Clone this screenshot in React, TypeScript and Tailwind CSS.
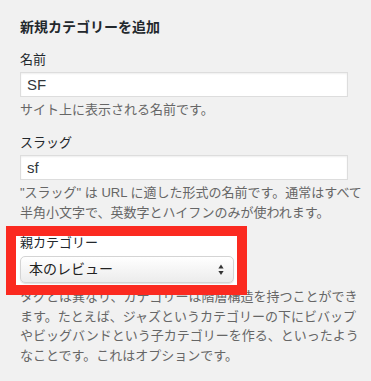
export default function App() {
  return (
    <div className="min-h-[381px] w-[371px] bg-[#f1f1f1] pt-[17px] font-['Liberation_Sans','Noto_Sans_CJK_JP',sans-serif] text-[#23282d]">
      <div className="ml-5 w-[328px]">
        {/* Heading */}
        <h2 className="text-[14px] font-bold leading-[20px]">新規カテゴリーを追加</h2>

        {/* Name */}
        <div className="mt-[13px]">
          <label className="block text-[13px] leading-[20px]">名前</label>
          <input
            type="text"
            defaultValue="SF"
            className="mt-[2px] block h-[25px] w-full border border-[#dddddd] bg-white px-[6px] text-[15px] text-[#32373c] shadow-[inset_0_1px_2px_rgba(0,0,0,0.07)] outline-none"
          />
          <p className="mt-[3px] text-[13px] leading-[20px] text-[#666666]">サイト上に表示される名前です。</p>
        </div>

        {/* Slug */}
        <div className="mt-[13px]">
          <label className="block text-[13px] leading-[20px]">スラッグ</label>
          <input
            type="text"
            defaultValue="sf"
            className="mt-[2px] block h-[25px] w-full border border-[#dddddd] bg-white px-[6px] text-[15px] text-[#32373c] shadow-[inset_0_1px_2px_rgba(0,0,0,0.07)] outline-none"
          />
          <p className="mt-[3px] whitespace-nowrap text-[13px] leading-[19.5px] text-[#666666]">
            "スラッグ" は URL に適した形式の名前です。通常はすべて
            <br />
            半角小文字で、英数字とハイフンのみが使われます。
          </p>
        </div>

        {/* Parent (highlighted) */}
        <div className="relative z-10 -ml-1 mt-[14px] h-[49px] w-[221px] bg-white pl-1 pr-[3px] outline-[10px] outline-solid outline-[#fb2a20]">
          <label className="block text-[13px] leading-[14px]">親カテゴリー</label>
          <div className="mt-[6px] flex h-[27px] items-center justify-between rounded-[5px] border border-[#d4d4d4] bg-gradient-to-b from-white to-[#ececec] pl-[8px] pr-[8px] shadow-[0_1px_1px_rgba(0,0,0,0.12)]">
            <span className="text-[14px] text-[#222]">本のレビュー</span>
            <svg width="6" height="12" viewBox="0 0 6 12" className="mr-[1px]">
              <path d="M3 0.5 L5.6 4.5 L0.4 4.5 Z" fill="#333" />
              <path d="M0.4 7 L5.6 7 L3 11 Z" fill="#333" />
            </svg>
          </div>
        </div>

        <p className="mt-[2px] w-[345px] whitespace-nowrap text-[13px] leading-[19.5px] text-[#666666]">
          タグとは異なり、カテゴリーは階層構造を持つことができ
          <br />
          ます。たとえば、ジャズというカテゴリーの下にビバップ
          <br />
          やビッグバンドという子カテゴリーを作る、といったよう
          <br />
          なことです。これはオプションです。
        </p>
      </div>
    </div>
  );
}
